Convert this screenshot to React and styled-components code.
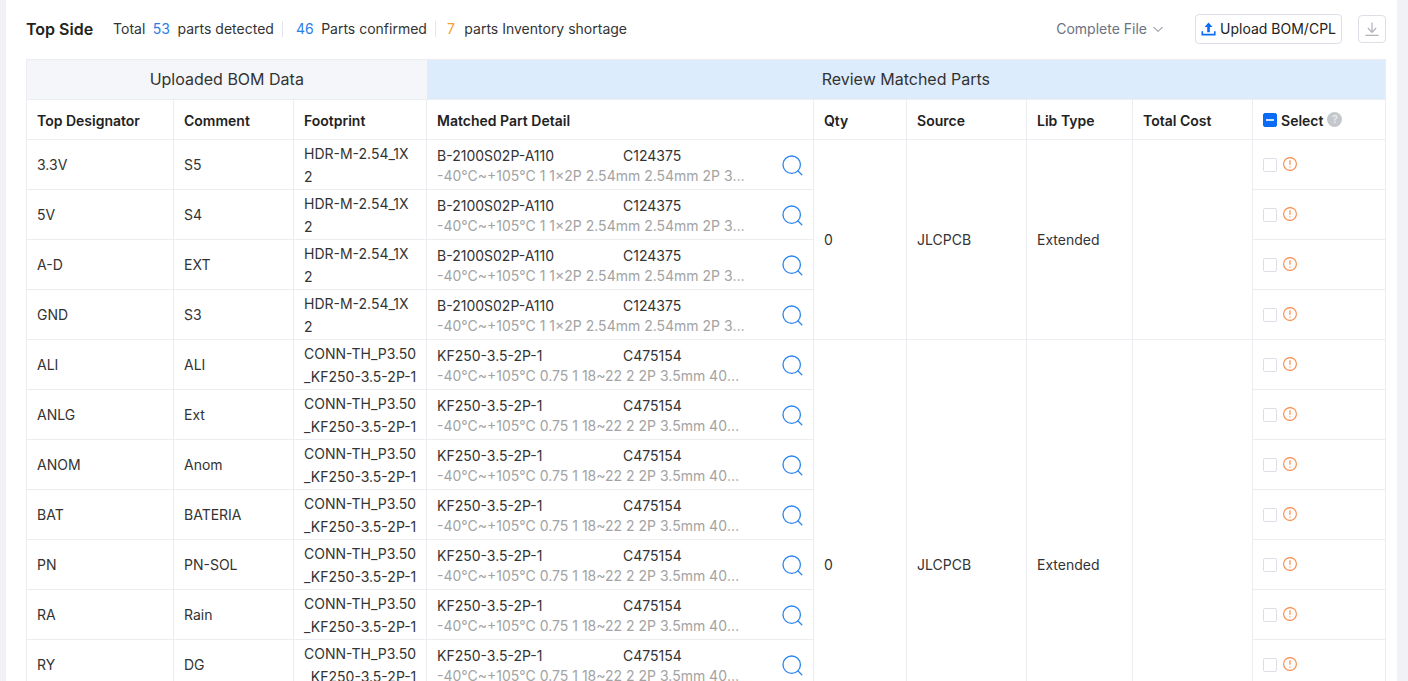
import React from 'react';
import styled, { createGlobalStyle } from 'styled-components';

const GlobalStyle = createGlobalStyle`
  html, body {
    margin: 0;
    height: 681px;
    overflow: hidden;
    background: #f0f2f7;
    font-family: Inter, "Noto Sans", sans-serif;
    font-size: 14px;
    color: #222;
  }
`;

const Page = styled.div`
  margin: 0 11px 0 6px;
  height: 681px;
  padding: 0 11px 0 20px;
  background: #fff;
  overflow: hidden;
`;

const Toolbar = styled.div`
  display: flex;
  align-items: center;
  height: 59px;
  padding-bottom: 2px;
  box-sizing: border-box;
`;

const Title = styled.h2`
  margin: 0 20px 0 0;
  font-size: 16px;
  font-weight: 600;
  color: #222;
`;

const Stat = styled.span`
  display: flex;
  align-items: center;
  gap: ${({ $last }) => ($last ? '9.5px' : '7.5px')};
  height: 16px;
  padding-right: 8px;
  margin-right: 13px;
  margin-left: ${({ $last }) => ($last ? '-2px' : '0')};
  border-right: ${({ $last }) => ($last ? 'none' : '1px solid #e4e6eb')};
  color: #333;
`;

const Count = styled.span`
  color: ${({ $warn }) => ($warn ? '#f5a02c' : '#2b7de9')};
`;

const Spacer = styled.div`
  flex: 1;
`;

const FileSelect = styled.div`
  display: flex;
  align-items: center;
  gap: 5px;
  margin-right: 31px;
  color: #6b7280;
`;

const UploadButton = styled.button`
  display: flex;
  align-items: center;
  gap: 4px;
  height: 30px;
  width: 147px;
  padding: 0 5px;
  box-sizing: border-box;
  background: #fff;
  border: 1px solid #dcdfe6;
  border-radius: 4px;
  font: inherit;
  color: #222;
  white-space: nowrap;
`;

const IconButton = styled.button`
  display: flex;
  align-items: center;
  justify-content: center;
  width: 28px;
  height: 28px;
  margin-left: 16px;
  padding: 0;
  background: #fff;
  border: 1px solid #dcdfe6;
  border-radius: 4px;
`;

const Table = styled.table`
  width: 1359px;
  table-layout: fixed;
  border-collapse: collapse;
  border: 1px solid #ebedf0;
`;

const GroupCell = styled.th`
  height: 40px;
  padding: 0 0 1px;
  box-sizing: border-box;
  font-size: 16px;
  font-weight: 400;
  color: #333;
  background: ${({ $review }) => ($review ? '#ddecfc' : '#f4f6fa')};
`;

const HeadCell = styled.th`
  height: 40px;
  padding: 1px 10px 0;
  box-sizing: border-box;
  text-align: left;
  font-weight: 600;
  color: #222;
  border: 1px solid #ebedf0;
`;

const Cell = styled.td`
  height: 50px;
  padding: 0 10px;
  box-sizing: border-box;
  color: #333;
  border: 1px solid #ebedf0;
`;

const FootprintCell = styled(Cell)`
  padding-top: 1px;
  line-height: 23px;
  white-space: nowrap;
`;

const FootprintLine = styled.div``;

const Detail = styled.div`
  display: flex;
  align-items: center;
  justify-content: space-between;
`;

const DetailText = styled.div`
  width: 310px;
  padding-top: 2px;
  line-height: 20px;
`;

const PartLine = styled.div`
  display: flex;
`;

const PartName = styled.span`
  width: 186px;
`;

const Spec = styled.div`
  color: #a3a3a3;
  white-space: nowrap;
  overflow: hidden;
  text-overflow: ellipsis;
`;

const SearchWrap = styled.span`
  display: flex;
  position: relative;
  top: 1px;
`;

const SelectHead = styled.div`
  display: flex;
  align-items: center;
  gap: 4px;
`;

const Check = styled.span`
  display: inline-flex;
  align-items: center;
  justify-content: center;
  width: 14px;
  height: 14px;
  box-sizing: border-box;
  border-radius: 2px;
  border: 1px solid ${({ $on }) => ($on ? '#0a6cf5' : '#dcdfe6')};
  background: ${({ $on }) => ($on ? '#0a6cf5' : '#fff')};
`;

const Dash = styled.span`
  width: 8px;
  height: 2px;
  background: #cfe2fd;
`;

const HelpDot = styled.span`
  display: inline-flex;
  align-items: center;
  justify-content: center;
  width: 15px;
  height: 15px;
  margin-top: -2px;
  border-radius: 50%;
  background: #c4c7cc;
  color: #e8e9eb;
  font-size: 11px;
  font-weight: 600;
`;

const SelectRow = styled.div`
  display: flex;
  align-items: center;
  gap: 6px;
`;

const AlertWrap = styled.span`
  display: flex;
  margin-top: -2px;
`;

const UploadIcon = () => (
  <svg width="16" height="16" viewBox="0 0 16 16" fill="#0a6cf5">
    <path d="M8 1 12.2 6H9.4v5.4H6.6V6H3.8Z" />
    <path d="M.5 10.5h1.7v2.6h11.6v-2.6h1.7v4.3H.5Z" />
  </svg>
);

const DownloadIcon = () => (
  <svg width="16" height="16" viewBox="0 0 16 16" fill="none" stroke="#b0b3b8" strokeWidth="1.2">
    <path d="M8 1.5V11M3.8 7 8 11.3 12.2 7M1.5 14.3h13" />
  </svg>
);

const ChevronIcon = () => (
  <svg width="12" height="12" viewBox="0 0 12 12" fill="none" stroke="#6b7280" strokeWidth="1">
    <path d="M1.5 4 6 8.5 10.5 4" />
  </svg>
);

const SearchIcon = () => (
  <svg width="21" height="21" viewBox="0 0 21 21" fill="none" stroke="#2b85ee" strokeWidth="1.3" strokeLinecap="round">
    <circle cx="9.7" cy="9.7" r="8.7" />
    <path d="M16 16l3.8 3.8" />
  </svg>
);

const AlertIcon = () => (
  <svg width="14" height="14" viewBox="0 0 14 14" fill="none" stroke="#f7894a" strokeWidth="1.1">
    <circle cx="7" cy="7" r="6.4" />
    <path d="M7 3.2v4.6M7 9.4v1.2" strokeWidth="1.2" />
  </svg>
);

const headerPart = {
  name: 'B-2100S02P-A110',
  code: 'C124375',
  spec: '-40°C~+105°C 1 1×2P 2.54mm 2.54mm 2P 300V 3A Pin Header',
  footprint: ['HDR-M-2.54_1X', '2'],
};

const terminalPart = {
  name: 'KF250-3.5-2P-1',
  code: 'C475154',
  spec: '-40°C~+105°C 0.75 1 18~22 2 2P 3.5mm 400V 10A Screw Terminal',
  footprint: ['CONN-TH_P3.50', '_KF250-3.5-2P-1'],
};

const groups = [
  {
    part: headerPart,
    rows: [
      ['3.3V', 'S5'],
      ['5V', 'S4'],
      ['A-D', 'EXT'],
      ['GND', 'S3'],
    ],
  },
  {
    part: terminalPart,
    rows: [
      ['ALI', 'ALI'],
      ['ANLG', 'Ext'],
      ['ANOM', 'Anom'],
      ['BAT', 'BATERIA'],
      ['PN', 'PN-SOL'],
      ['RA', 'Rain'],
      ['RY', 'DG'],
      ['SOL', 'SOL'],
      ['VIN', 'VIN'],
    ],
  },
];

const widths = [147, 120, 133, 387, 93, 120, 106, 120, 133];

const App = () => (
  <>
    <GlobalStyle />
    <Page>
      <Toolbar>
        <Title>Top Side</Title>
        <Stat>Total <Count>53</Count> parts detected</Stat>
        <Stat><Count>46</Count> Parts confirmed</Stat>
        <Stat $last><Count $warn>7</Count> parts Inventory shortage</Stat>
        <Spacer />
        <FileSelect>Complete File <ChevronIcon /></FileSelect>
        <UploadButton><UploadIcon />Upload BOM/CPL</UploadButton>
        <IconButton aria-label="Download"><DownloadIcon /></IconButton>
      </Toolbar>
      <Table>
        <colgroup>
          {widths.map((w, i) => <col key={i} width={w} />)}
        </colgroup>
        <thead>
          <tr>
            <GroupCell colSpan={3}>Uploaded BOM Data</GroupCell>
            <GroupCell colSpan={6} $review>Review Matched Parts</GroupCell>
          </tr>
          <tr>
            <HeadCell>Top Designator</HeadCell>
            <HeadCell>Comment</HeadCell>
            <HeadCell>Footprint</HeadCell>
            <HeadCell>Matched Part Detail</HeadCell>
            <HeadCell>Qty</HeadCell>
            <HeadCell>Source</HeadCell>
            <HeadCell>Lib Type</HeadCell>
            <HeadCell>Total Cost</HeadCell>
            <HeadCell>
              <SelectHead>
                <Check $on><Dash /></Check>
                Select
                <HelpDot>?</HelpDot>
              </SelectHead>
            </HeadCell>
          </tr>
        </thead>
        <tbody>
          {groups.map(({ part, rows }) =>
            rows.map(([designator, comment], i) => (
              <tr key={designator}>
                <Cell>{designator}</Cell>
                <Cell>{comment}</Cell>
                <FootprintCell>
                  {part.footprint.map((line) => <FootprintLine key={line}>{line}</FootprintLine>)}
                </FootprintCell>
                <Cell>
                  <Detail>
                    <DetailText>
                      <PartLine>
                        <PartName>{part.name}</PartName>
                        {part.code}
                      </PartLine>
                      <Spec>{part.spec}</Spec>
                    </DetailText>
                    <SearchWrap><SearchIcon /></SearchWrap>
                  </Detail>
                </Cell>
                {i === 0 && (
                  <>
                    <Cell rowSpan={rows.length}>0</Cell>
                    <Cell rowSpan={rows.length}>JLCPCB</Cell>
                    <Cell rowSpan={rows.length}>Extended</Cell>
                    <Cell rowSpan={rows.length} />
                  </>
                )}
                <Cell>
                  <SelectRow>
                    <Check />
                    <AlertWrap><AlertIcon /></AlertWrap>
                  </SelectRow>
                </Cell>
              </tr>
            ))
          )}
        </tbody>
      </Table>
    </Page>
  </>
);

export default App;
